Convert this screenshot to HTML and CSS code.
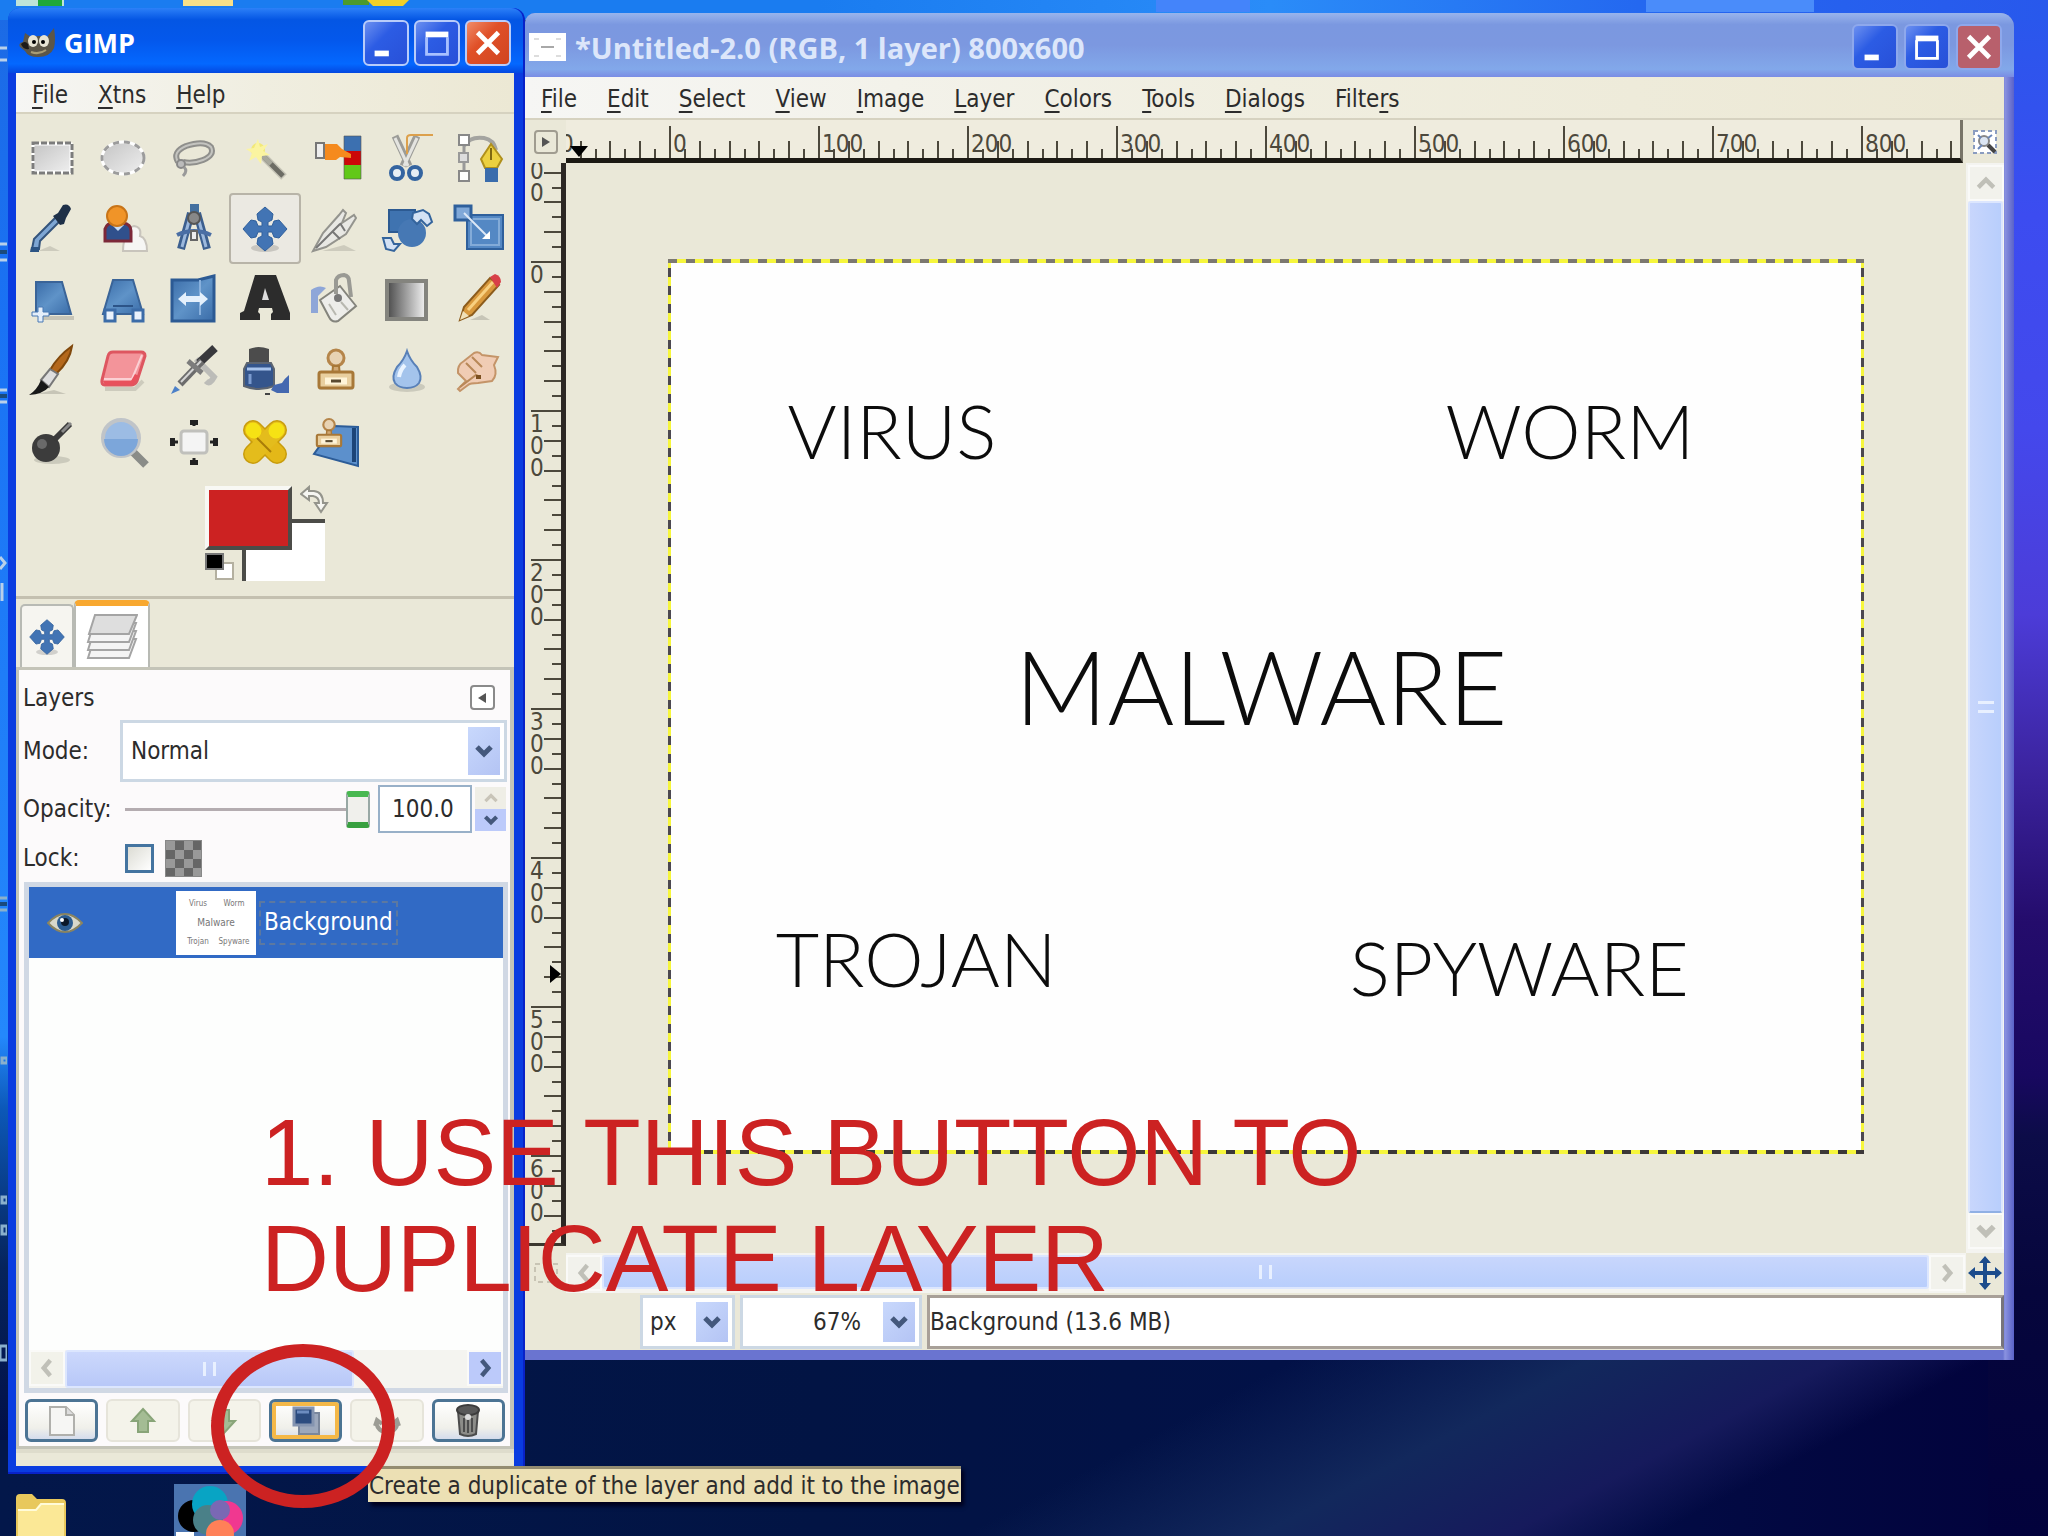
FILE: index.html
```
<!DOCTYPE html>
<html lang="en">
	<head>
		<meta charset="utf-8" />
		<meta name="viewport" content="width=device-width, initial-scale=1" />
		<title>GIMP</title>
		<link rel="stylesheet" href="styles.css">
	</head>
	<body>
		<!-- shared icon shapes -->
		<svg class="defs" width="0" height="0">
			<defs>
				<linearGradient id="gBlue" x1="0" y1="0" x2="1" y2="1">
					<stop offset="0" stop-color="#3a6ca8" />
					<stop offset="0.5" stop-color="#5f93c8" />
					<stop offset="1" stop-color="#3a6ca8" />
				</linearGradient>
				<linearGradient id="gGray" x1="0" y1="0" x2="1" y2="1">
					<stop offset="0" stop-color="#c4c4c4" />
					<stop offset="1" stop-color="#efefef" />
				</linearGradient>
				<linearGradient id="gFade" x1="0" y1="0" x2="1" y2="0">
					<stop offset="0" stop-color="#4a4a4a" />
					<stop offset="1" stop-color="#f4f4f4" />
				</linearGradient>
				<symbol id="chevDown" viewBox="0 0 20 20">
					<path d="M3 6l7 7 7-7" fill="none" stroke="currentColor" stroke-width="5" />
				</symbol>
				<symbol id="chevUp" viewBox="0 0 20 20">
					<path d="M3 14l7-7 7 7" fill="none" stroke="currentColor" stroke-width="4" />
				</symbol>
				<symbol id="chevLeft" viewBox="0 0 20 20">
					<path d="M13 3l-6 7 6 7" fill="none" stroke="currentColor" stroke-width="4" />
				</symbol>
				<symbol id="chevRight" viewBox="0 0 20 20">
					<path d="M7 3l6 7-6 7" fill="none" stroke="currentColor" stroke-width="4" />
				</symbol>
				<symbol id="move" viewBox="0 0 56 56">
					<ellipse cx="28" cy="47" rx="14" ry="4" fill="#000" opacity="0.15" />
					<path d="M28 6l8 7-1 6-4 2v4h4l2-5 5-1 8 9-8 9-5-1-2-5h-4v4l4 2 1 6-8 7-8-7 1-6 4-2v-4h-4l-2 5-5 1-8-9 8-9 5 1 2 5h4v-4l-4-2-1-6z" fill="#4274b4" stroke="#30609c" stroke-width="1" />
				</symbol>
				<symbol id="stamp" viewBox="0 0 56 56">
					<path d="M11 44h34" stroke="#000" opacity="0.2" stroke-width="5" />
					<circle cx="28" cy="15" r="8" fill="#e8d3b4" stroke="#b5854a" stroke-width="3" />
					<path d="M25 23h6l1 10h-8z" fill="#d0a874" stroke="#a87838" stroke-width="2" />
					<rect x="11" y="29" width="34" height="16" rx="2" fill="#e9cf9f" stroke="#a87838" stroke-width="3" />
					<path d="M17 38h22" stroke="#fff4d8" stroke-width="7" />
					<path d="M23 38h10" stroke="#5a4a30" stroke-width="3" />
				</symbol>
			</defs>
		</svg>

		<main class="desktop">
			<!-- desktop bits that show around the windows -->
			<div class="strip stripA"></div>
			<div class="strip stripB"></div>
			<svg class="topIcons" width="420" height="8" viewBox="0 0 420 8">
				<path d="M16 0h48v6H16z" fill="#bfe4d8" /><path d="M38 0h24v6H38z" fill="#1fa83a" />
				<path d="M183 0h50v6h-50z" fill="#f8e088" />
				<path d="M343 0h26v5h-26z" fill="#4c9a2c" /><path d="M367 0h42l-6 6h-30z" fill="#f2d028" />
			</svg>
			<svg class="edgeIcons" width="7" height="1536" viewBox="0 0 7 1536">
				<path d="M0 48h7M0 60h7M0 244h7M0 260h7M0 390h7M0 402h7M2 583v18M0 557l5 6-5 6" stroke="#b8d0ea" stroke-width="3" fill="none" />
				<path d="M0 898h7M0 910h7M2 1058h5v5H2zM2 1197h5v6H2zM2 1226h5v8H2zM0 1346h7v14H0z" stroke="#8ab0cc" stroke-width="3" fill="none" />
				<path d="M0 252h7M0 396h7M0 904h7" stroke="#1a4a7c" stroke-width="4" />
			</svg>
			<svg class="folder" width="56" height="42" viewBox="0 0 56 42">
				<path d="M2 4q0-4 4-4h12l5 5h25q4 0 4 4v33H2z" fill="#e8c85c" />
				<path d="M4 16h18l5-6h23v32H4z" fill="#fbe896" />
				<path d="M4 16h18l5-6h23" stroke="#fffbd8" stroke-width="2" fill="none" />
			</svg>
			<svg class="swatchIcon" width="72" height="52" viewBox="0 0 72 52">
				<rect width="72" height="52" fill="#4a74b0" />
				<circle cx="20" cy="32" r="16" fill="#000" />
				<circle cx="36" cy="20" r="18" fill="#08a4c4" />
				<circle cx="52" cy="34" r="17" fill="#f03890" />
				<circle cx="34" cy="36" r="15" fill="#4a8088" />
				<circle cx="46" cy="50" r="14" fill="#ff8058" />
				<circle cx="46" cy="26" r="10" fill="#7a68b4" />
				<rect x="2" y="48" width="18" height="4" fill="#fff" />
			</svg>

			<!-- image window -->
			<section class="window imageWindow">
				<header class="titleBar">
					<svg class="docIcon" width="37" height="28" viewBox="0 0 37 28">
						<rect width="37" height="28" fill="#fff" />
						<path d="M12 14h13" stroke="#a8a8a8" stroke-width="2" />
						<path d="M5 6h5M27 6h5M5 23h5M27 23h5" stroke="#ddd" stroke-width="2" />
					</svg>
					<h1>*Untitled-2.0 (RGB, 1 layer) 800x600</h1>
					<div class="winButtons">
						<button class="winBtn" aria-label="Minimize"><svg viewBox="0 0 40 40"><path d="M9 31h15" stroke="#fff" stroke-width="6" /></svg></button>
						<button class="winBtn" aria-label="Maximize"><svg viewBox="0 0 40 40"><path d="M9 13v19h22V13" fill="none" stroke="#fff" stroke-width="3" /><path d="M8 11h24" stroke="#fff" stroke-width="6" /></svg></button>
						<button class="winBtn closeBtn" aria-label="Close"><svg viewBox="0 0 40 40"><path d="M9 9l22 22M31 9L9 31" stroke="#fff" stroke-width="5" /></svg></button>
					</div>
				</header>
				<nav class="menuBar">
					<a href="#"><u>F</u>ile</a>
					<a href="#"><u>E</u>dit</a>
					<a href="#"><u>S</u>elect</a>
					<a href="#"><u>V</u>iew</a>
					<a href="#"><u>I</u>mage</a>
					<a href="#"><u>L</u>ayer</a>
					<a href="#"><u>C</u>olors</a>
					<a href="#"><u>T</u>ools</a>
					<a href="#"><u>D</u>ialogs</a>
					<a href="#">Filte<u>r</u>s</a>
				</nav>
				<div class="workArea">
					<button class="cornerBtn" aria-label="Image menu">
						<svg width="26" height="26" viewBox="0 0 26 26"><rect x="2" y="2" width="22" height="22" rx="3" fill="none" stroke="#a09c90" stroke-width="2" /><path d="M9 8l8 5-8 5z" fill="#555" /></svg>
					</button>
					<div class="hRuler"><svg id="hRuler" width="100%" height="43"></svg></div>
					<button class="cornerBtn" aria-label="Zoom image with window">
						<svg width="24" height="24" viewBox="0 0 24 24"><rect x="1" y="1" width="22" height="22" fill="#fff" stroke="#8a9cc0" stroke-width="2" stroke-dasharray="4 3" /><circle cx="11" cy="11" r="5" fill="#dce6f4" stroke="#888" stroke-width="2" /><path d="M5 5l3 3M19 5l-4 3M5 19l4-4" stroke="#6a86b8" stroke-width="2" /><path d="M15 15l7 7" stroke="#444" stroke-width="4" /></svg>
					</button>
					<div class="vRuler"><svg id="vRuler" width="41" height="100%"></svg></div>
					<div class="view">
						<div class="canvas">
							<span class="word virus">VIRUS</span>
							<span class="word worm">WORM</span>
							<span class="word malware">MALWARE</span>
							<span class="word trojan">TROJAN</span>
							<span class="word spyware">SPYWARE</span>
						</div>
					</div>
					<div class="vScroll">
						<button aria-label="Scroll up"><svg width="22" height="22"><use href="#chevUp" /></svg></button>
						<div class="thumb"><i class="grip"></i></div>
						<button aria-label="Scroll down"><svg width="22" height="22"><use href="#chevDown" /></svg></button>
					</div>
					<button class="cornerBtn" aria-label="Quick mask">
						<svg width="26" height="26" viewBox="0 0 26 26"><rect x="2" y="4" width="22" height="18" fill="none" stroke="#c8c4b4" stroke-width="2" stroke-dasharray="5 4" /></svg>
					</button>
					<div class="hScroll">
						<button aria-label="Scroll left"><svg width="22" height="22"><use href="#chevLeft" /></svg></button>
						<div class="thumb"><i class="grip"></i></div>
						<button aria-label="Scroll right"><svg width="22" height="22"><use href="#chevRight" /></svg></button>
					</div>
					<button class="cornerBtn" aria-label="Navigate">
						<svg width="34" height="34" viewBox="0 0 34 34"><path d="M17 4v26M4 17h26" stroke="#1c4c8c" stroke-width="4" /><path d="M17 0l6 7H11zM17 34l6-7H11zM0 17l7-6v12zM34 17l-7-6v12z" fill="#1c4c8c" /></svg>
					</button>
				</div>
				<footer class="statusBar">
					<span class="combo unitCombo">
						<select aria-label="Unit"><option>px</option></select>
						<span class="drop"><svg width="20" height="20"><use href="#chevDown" /></svg></span>
					</span>
					<span class="combo zoomCombo">
						<select aria-label="Zoom"><option>67%</option></select>
						<span class="drop"><svg width="20" height="20"><use href="#chevDown" /></svg></span>
					</span>
					<output class="status">Background (13.6 MB)</output>
				</footer>
			</section>

			<!-- toolbox -->
			<section class="window toolbox">
				<header class="titleBar">
					<svg class="wilber" width="38" height="32" viewBox="0 0 38 32">
						<path d="M6 6l6 4q8-2 16 0l7-9q2 12 0 20-4 9-16 9-10 0-13-6l-5-4q-2-4 3-5z" fill="#5c5648" />
						<path d="M2 17q4-4 7 0l1 5q-6 1-8-5z" fill="#1c1a18" />
						<ellipse cx="14" cy="14" rx="5" ry="6" fill="#e8e4d4" /><ellipse cx="25" cy="14" rx="5" ry="6" fill="#e8e4d4" />
						<circle cx="15" cy="15" r="2" /><circle cx="24" cy="15" r="2" />
						<path d="M12 25q8 3 15-2" stroke="#a89c74" stroke-width="2" fill="none" />
					</svg>
					<h1>GIMP</h1>
					<div class="winButtons">
						<button class="winBtn" aria-label="Minimize"><svg viewBox="0 0 40 40"><path d="M8 31h15" stroke="#fff" stroke-width="6" /></svg></button>
						<button class="winBtn" aria-label="Maximize"><svg viewBox="0 0 40 40"><path d="M9 14v18h22V14" fill="none" stroke="#a8c0ff" stroke-width="3" /><path d="M8 11h24" stroke="#fff" stroke-width="6" /></svg></button>
						<button class="winBtn closeBtn" aria-label="Close"><svg viewBox="0 0 40 40"><path d="M9 9l22 22M31 9L9 31" stroke="#fff" stroke-width="5" /></svg></button>
					</div>
				</header>
				<nav class="menuBar">
					<a href="#"><u>F</u>ile</a>
					<a href="#"><u>X</u>tns</a>
					<a href="#"><u>H</u>elp</a>
				</nav>

				<div class="tools">
					<button aria-label="Rectangle select"><svg viewBox="0 0 56 56"><rect x="9" y="14" width="38" height="28" fill="url(#gGray)" stroke="#fff" stroke-width="3" /><rect x="9" y="13" width="39" height="30" fill="none" stroke="#7c7c7c" stroke-width="3" stroke-dasharray="6 2" /></svg></button>
					<button aria-label="Ellipse select"><svg viewBox="0 0 56 56"><ellipse cx="28" cy="28" rx="21" ry="16" fill="url(#gGray)" stroke="#fff" stroke-width="3" /><ellipse cx="28" cy="28" rx="21" ry="16" fill="none" stroke="#9c9c9c" stroke-width="3" stroke-dasharray="6 5" /></svg></button>
					<button aria-label="Free select"><svg viewBox="0 0 56 56"><path d="M12 32q-6-10 8-16 18-6 25 1 4 8-8 13-10 4-20 2" fill="none" stroke="#8f8f8c" stroke-width="6" /><path d="M12 32q-6-10 8-16 18-6 25 1 4 8-8 13-10 4-20 2" fill="none" stroke="#c4c4c0" stroke-width="2" /><circle cx="15" cy="34" r="4" fill="#bbb" stroke="#888" stroke-width="2" /><path d="M18 37q4 4-1 9" fill="none" stroke="#999" stroke-width="3" /></svg></button>
					<button aria-label="Fuzzy select"><svg viewBox="0 0 56 56"><path d="M27 27l20 20" stroke="#000" opacity="0.15" stroke-width="8" /><path d="M24 24l22 22" stroke="#6c6c64" stroke-width="5" /><path d="M24 24l10 10" stroke="#a8a89c" stroke-width="5" /><circle cx="21" cy="20" r="7" fill="#f4e860" opacity="0.8" /><path d="M21 9l2 8 8-3-5 7 7 4-8 1-1 8-5-7-7 4 3-8-6-4 8-1z" fill="#fbf4a0" /></svg></button>
					<button aria-label="Select by color"><svg viewBox="0 0 56 56"><rect x="36" y="6" width="17" height="15" fill="#3c70b0" /><rect x="36" y="21" width="17" height="14" fill="#cc0808" /><rect x="36" y="35" width="17" height="14" fill="#62c818" /><path d="M36 6h17v43H36z" fill="none" stroke="#555" stroke-width="1" opacity="0.6" /><rect x="8" y="13" width="8" height="15" fill="#eee" stroke="#777" stroke-width="2" /><path d="M17 14h12l5 5 9 5v4l-11-1-4 3H17z" fill="#f58a1e" /></svg></button>
					<button aria-label="Scissors select"><svg viewBox="0 0 56 56"><path d="M16 6l14 30M38 6L24 36" stroke="#9c9c98" stroke-width="7" /><path d="M16 8l13 28M38 8L25 36" stroke="#e4e4e0" stroke-width="3" /><path d="M28 24V8q0-3 4-3h22" fill="none" stroke="#dca04c" stroke-width="2" /><circle cx="18" cy="43" r="6" fill="#e8eef4" stroke="#3464a0" stroke-width="4" /><circle cx="36" cy="43" r="6" fill="#e8eef4" stroke="#3464a0" stroke-width="4" /></svg></button>
					<button aria-label="Paths"><svg viewBox="0 0 56 56"><path d="M14 10v38" stroke="#999" stroke-width="3" /><path d="M14 16q6-10 20-8 10 2 12 12" fill="none" stroke="#a4a4a0" stroke-width="4" /><rect x="9" y="5" width="10" height="10" fill="#fff" stroke="#888" stroke-width="2" /><rect x="9" y="23" width="9" height="9" fill="#ddd" stroke="#999" stroke-width="2" /><rect x="9" y="41" width="10" height="10" fill="#fff" stroke="#888" stroke-width="2" /><path d="M41 14l11 15-5 9H35l-4-9z" fill="#ecd040" stroke="#b0901c" stroke-width="2" /><path d="M41 18v12" stroke="#806810" stroke-width="2" /><rect x="35" y="38" width="13" height="14" fill="#3a6cac" /></svg></button>

					<button aria-label="Color picker"><svg viewBox="0 0 56 56"><path d="M14 50h22l-10-5z" opacity="0.12" /><path d="M8 48l2-10 22-22 4 4-20 20-1 8z" fill="#7ea6d4" stroke="#34547c" stroke-width="2" /><path d="M7 46h8v5H6z" fill="#2c5484" /><path d="M29 15l5-3 5-8q6-2 8 4l-5 9-2 6-4 1z" fill="#1e3048" /></svg></button>
					<button aria-label="Foreground select"><svg viewBox="0 0 56 56"><path d="M28 50q0-14 6-15-2-9 5-10 8 1 6 10 7 2 7 15z" fill="#f6f6f4" stroke="#c8c4bc" stroke-width="2" /><path d="M10 40V28q2-6 8-6h10q8 1 8 8v10z" fill="#30508c" stroke="#7c2838" stroke-width="3" /><path d="M17 24l6 6 6-6z" fill="#c8dcf4" /><circle cx="22" cy="15" r="10" fill="#f09428" stroke="#c87418" stroke-width="2" /></svg></button>
					<button aria-label="Measure"><svg viewBox="0 0 56 56"><path d="M25 12L15 48M31 12l10 36" stroke="#3c5f8f" stroke-width="8" /><path d="M24 16l-8 30M32 16l8 30" stroke="#9cb8dc" stroke-width="3" /><path d="M11 34q17-8 34 0" fill="none" stroke="#4a6ea4" stroke-width="4" /><rect x="24" y="3" width="9" height="9" fill="#44709f" /><circle cx="28" cy="17" r="6" fill="#888" stroke="#555" stroke-width="2" /><rect x="25" y="30" width="6" height="9" fill="#eee" stroke="#666" stroke-width="2" /></svg></button>
					<button class="active" aria-label="Move"><svg><use href="#move" /></svg></button>
					<button aria-label="Crop"><svg viewBox="0 0 56 56"><path d="M14 50h34l-12-6z" opacity="0.12" /><path d="M5 50l10-18 16-18 4-5 3 3-4 10 12-8 2 3-10 16-20 13z" fill="#e8e8e4" stroke="#94948e" stroke-width="2" /><path d="M8 47l24-24M24 30l8 8M32 22l5 8" stroke="#777" stroke-width="2" /></svg></button>
					<button aria-label="Rotate"><svg viewBox="0 0 56 56"><path d="M10 9h26v22H10z" fill="#3f73b0" stroke="#2c5a92" stroke-width="2" /><circle cx="33" cy="32" r="14" fill="#4678b4" /><path d="M34 12l10-3 6 4 3 8-5 4-6-6-4 4-5-5z" fill="#d4e2f4" stroke="#34649c" stroke-width="2" /><path d="M4 37h8l3 6h6l-6 7-8-2z" fill="#d4e2f4" stroke="#34649c" stroke-width="2" /></svg></button>
					<button aria-label="Scale"><svg viewBox="0 0 56 56"><rect x="17" y="14" width="36" height="34" fill="#5488c4" stroke="#2f609c" stroke-width="2" /><rect x="21" y="18" width="28" height="26" fill="none" stroke="#83abd8" stroke-width="2" /><rect x="5" y="5" width="16" height="14" fill="#80a8d8" stroke="#2f609c" stroke-width="3" /><path d="M14 12l24 24" stroke="#dce8f6" stroke-width="2" /><path d="M32 38h8v-8z" fill="#fff" /></svg></button>

					<button aria-label="Shear"><svg viewBox="0 0 56 56"><path d="M16 46h34" stroke="#000" opacity="0.15" stroke-width="4" /><path d="M12 10h26l9 32H12z" fill="url(#gBlue)" stroke="#3a6498" stroke-width="2" /><path d="M8 40h6v-5h5v5h6v4h-6v6h-5v-6H8z" fill="#e4eefa" stroke="#4878b4" stroke-width="1" /></svg></button>
					<button aria-label="Perspective"><svg viewBox="0 0 56 56"><path d="M18 8h20l10 34H8z" fill="url(#gBlue)" stroke="#3a6498" stroke-width="2" /><path d="M18 34h20" stroke="#2c5488" stroke-width="2" /><rect x="10" y="38" width="10" height="11" fill="#eaf2fc" stroke="#3c6ca8" stroke-width="3" /><rect x="38" y="38" width="10" height="11" fill="#eaf2fc" stroke="#3c6ca8" stroke-width="3" /></svg></button>
					<button aria-label="Flip"><svg viewBox="0 0 56 56"><path d="M6 8h26l16-4v45H6z" fill="url(#gBlue)" stroke="#2c5a94" stroke-width="3" /><path d="M34 8v35" stroke="#88b0dc" stroke-width="2" /><path d="M12 27l8-7v4h14v-4l8 7-8 7v-4H20v4z" fill="#e4f0fc" /></svg></button>
					<button aria-label="Text"><svg viewBox="0 0 56 56"><path d="M18 3h21l14 38v7H34v-6l2-2-1-4H22l-1 4 2 2v6H3v-7l4-2z" fill="#2c2c2c" /><path d="M25 28l3-12 4 12z" fill="#ddd" /></svg></button>
					<button aria-label="Bucket fill"><svg viewBox="0 0 56 56"><path d="M3 18q8-6 15-2l-8 8v17H3z" fill="#8ea6d8" /><path d="M12 28l20-14 16 20-18 15q-6 2-9-4z" fill="#ededea" stroke="#84847c" stroke-width="2" /><path d="M28 22V8q2-5 8-5 5 1 5 6l2 16" fill="none" stroke="#9a9a94" stroke-width="4" /><circle cx="30" cy="26" r="4" fill="#777" /><path d="M21 32l7 11M33 30l7 8" stroke="#b8b8b0" stroke-width="2" /></svg></button>
					<button aria-label="Blend"><svg viewBox="0 0 56 56"><rect x="8" y="9" width="39" height="38" fill="url(#gFade)" stroke="#84847e" stroke-width="4" /></svg></button>
					<button aria-label="Pencil"><svg viewBox="0 0 56 56"><path d="M20 48h20l-8-5z" opacity="0.15" /><path d="M10 48l4-13 26-29 9 7-27 30z" fill="#d8983c" stroke="#8c5c1c" stroke-width="2" /><path d="M18 38l25-28" stroke="#f8d080" stroke-width="3" /><path d="M40 5l5-3q6 2 6 8l-4 6z" fill="#d84048" /><path d="M10 48l3-9 6 5z" fill="#f0e0b8" /></svg></button>

					<button aria-label="Paintbrush"><svg viewBox="0 0 56 56"><path d="M12 51h30l-12-4z" opacity="0.15" /><path d="M48 3q-14 10-22 24l6 4Q46 18 48 3z" fill="#b4681c" stroke="#80480c" stroke-width="2" /><path d="M26 26l8 5-9 13-8-7z" fill="#dedede" stroke="#777" stroke-width="2" /><path d="M17 37l8 7q-6 7-20 8 8-5 12-15z" fill="#181818" /></svg></button>
					<button aria-label="Eraser"><svg viewBox="0 0 56 56"><path d="M10 46h30l8-8" fill="none" stroke="#000" opacity="0.12" stroke-width="4" /><path d="M18 9h28q4 0 4 4l-8 25q-2 4-6 4H10q-4 0-3-5l6-24q1-4 5-4z" fill="#f3949a" stroke="#de5660" stroke-width="3" /><path d="M9 36h28l10-24" fill="none" stroke="#fbd0d4" stroke-width="2" /><path d="M8 38h28l4-7 4 2-6 9H10z" fill="#e8505c" /></svg></button>
					<button aria-label="Airbrush"><svg viewBox="0 0 56 56"><path d="M30 16l18 18q-4 8-8 4" fill="none" stroke="#bcbcb8" stroke-width="6" /><path d="M49 5L33 20" stroke="#38383c" stroke-width="8" /><path d="M36 18L14 41" stroke="#6c6c6c" stroke-width="7" /><path d="M35 18L15 39" stroke="#d4d4d4" stroke-width="2" /><path d="M22 18l14 12" stroke="#7c7c7c" stroke-width="5" /><path d="M5 51l4-8 5 4z" fill="#4c80c8" /></svg></button>
					<button aria-label="Ink"><svg viewBox="0 0 56 56"><path d="M12 6q9-4 20 0v14H12z" fill="#4c4c4c" /><path d="M10 20h24l3 6v17q-15 6-30 0V26z" fill="#34558c" stroke="#5c6470" stroke-width="2" /><path d="M10 26h24" stroke="#a8c4ec" stroke-width="3" /><path d="M13 31v10" stroke="#7c9cd0" stroke-width="3" /><path d="M52 32q-5 4-7 8l-8 2-3 5 6 3 12 0z" fill="#4468b0" /><path d="M28 51h5" stroke="#444" stroke-width="2" /></svg></button>
					<button aria-label="Clone"><svg><use href="#stamp" /></svg></button>
					<button aria-label="Blur"><svg viewBox="0 0 56 56"><ellipse cx="28" cy="44" rx="18" ry="5" opacity="0.13" /><path d="M28 8q3 9 10 16 6 10 2 16-4 5-12 5t-12-5q-4-6 2-16 7-7 10-16z" fill="#a4c4ec" stroke="#5880b8" stroke-width="2" /><path d="M20 34q1-7 6-12" fill="none" stroke="#eaf4ff" stroke-width="4" /></svg></button>
					<button aria-label="Smudge"><svg viewBox="0 0 56 56"><path d="M8 46l8-8-8-8q-1-8 6-12l10-8q5-2 8 2l16 2-4 8q4 10-2 16l-14 2q-8 0-10 2l-8 6z" fill="#f0ccb4" stroke="#c49468" stroke-width="2" /><path d="M16 20l10 10M22 14l10 10M10 44l16-12 4 2" stroke="#b88858" stroke-width="2" fill="none" /><path d="M26 32h5v4h-5z" fill="#7c5020" /></svg></button>

					<button aria-label="Dodge and burn"><svg viewBox="0 0 56 56"><ellipse cx="28" cy="46" rx="18" ry="4" opacity="0.13" /><circle cx="22" cy="34" r="14" fill="#3c3c3c" /><circle cx="18" cy="30" r="5" fill="#6a6a6a" /><path d="M30 26L46 10" stroke="#3a3a3a" stroke-width="6" /><path d="M38 18l9-9" stroke="#888" stroke-width="3" /></svg></button>
					<button aria-label="Zoom"><svg viewBox="0 0 56 56"><path d="M38 38l13 13" stroke="#8a8c88" stroke-width="8" /><circle cx="26" cy="24" r="18" fill="#9cbce4" stroke="#c0c4c8" stroke-width="4" /><path d="M9 25h34a17 17 0 0 1-34 0z" fill="#7ca6da" /></svg></button>
					<button aria-label="Align"><svg viewBox="0 0 56 56"><rect x="15" y="17" width="26" height="22" rx="3" fill="#f4f4f4" stroke="#c0c0bc" stroke-width="3" /><path d="M28 12V7M28 44v7M12 28H5M44 28h7" stroke="#222" stroke-width="3" /><path d="M24 6h8v5h-8zM24 46h8v5h-8zM4 24h5v8H4zM47 24h5v8h-5z" fill="#222" /></svg></button>
					<button aria-label="Heal"><svg viewBox="0 0 56 56"><path d="M16 16l24 24" stroke="#c89c0c" stroke-width="20" stroke-linecap="round" /><path d="M40 16L16 40" stroke="#c89c0c" stroke-width="20" stroke-linecap="round" /><path d="M16 16l24 24" stroke="#e4b818" stroke-width="17" stroke-linecap="round" /><path d="M40 16L16 40" stroke="#e4bc1c" stroke-width="17" stroke-linecap="round" /><path d="M16 16l1 1M40 16l-1 1" stroke="#f6e214" stroke-width="15" stroke-linecap="round" /><path d="M20 24l14 14" stroke="#a87c08" stroke-width="2" /></svg></button>
					<button aria-label="Perspective clone"><svg viewBox="0 0 56 56"><path d="M26 12l24 1v39L6 40z" fill="#5c90cc" stroke="#2c5c98" stroke-width="2" /><path d="M46 14v34" stroke="#1c4478" stroke-width="4" /><svg x="0" y="0" width="42" height="40"><use href="#stamp" /></svg></svg></button>
				</div>

				<div class="colors">
					<div class="bgColor"></div>
					<div class="fgColor"></div>
					<svg class="swap" width="30" height="30" viewBox="0 0 30 30"><path d="M1 9l8-7v4h5q9 1 9 12h4l-6 9-6-9h4q0-6-6-7H9v4z" fill="#f6f6f2" stroke="#94948c" stroke-width="2" /></svg>
					<svg class="resetColors" width="30" height="28" viewBox="0 0 30 28"><rect x="11" y="10" width="17" height="16" fill="#fff" stroke="#b4b0a0" stroke-width="2" /><rect x="1" y="1" width="17" height="15" stroke="#777" stroke-width="2" /></svg>
				</div>

				<div class="tabs">
					<button class="tab" aria-label="Tool options"><svg width="44" height="48"><use href="#move" /></svg></button>
					<button class="tab tabActive" aria-label="Layers">
						<svg width="52" height="48" viewBox="0 0 52 48"><g fill="#f4f4f4" stroke="#a4a4a4" stroke-width="2"><path d="M8 26h42l-7 19H2z" /><path d="M8 18h42l-7 19H2z" /><path d="M8 10h42l-7 19H2z" /><path d="M9 2h42l-8 19H3z" fill="#dedede" /></g></svg>
					</button>
				</div>

				<div class="dock">
					<div class="dockHead">
						<h2>Layers</h2>
						<button aria-label="Tab menu"><svg width="26" height="26" viewBox="0 0 26 26"><rect x="1" y="1" width="23" height="23" rx="3" fill="#fff" stroke="#8a8a8a" stroke-width="2" /><path d="M8 13l8-5v10z" fill="#555" /></svg></button>
					</div>
					<div class="row modeRow">
						<label for="mode">Mode:</label>
						<span class="combo">
							<select id="mode"><option>Normal</option></select>
							<span class="drop"><svg width="20" height="20"><use href="#chevDown" /></svg></span>
						</span>
					</div>
					<div class="row opacityRow">
						<label for="opacity">Opacity:</label>
						<input type="range" id="opacity" min="0" max="100" value="100" class="slider" />
						<input type="text" class="amount" value="100.0" aria-label="Opacity value" />
						<span class="spin">
							<button aria-label="Increase" disabled><svg width="16" height="16"><use href="#chevUp" /></svg></button>
							<button aria-label="Decrease"><svg width="16" height="16"><use href="#chevDown" /></svg></button>
						</span>
					</div>
					<div class="row lockRow">
						<label for="lock">Lock:</label>
						<input type="checkbox" id="lock" />
						<i class="checker"></i>
					</div>
					<div class="layerList">
						<div class="layer">
							<svg class="eye" width="36" height="24" viewBox="0 0 36 24"><path d="M1 12Q18-6 35 12 18 30 1 12z" fill="#d8d8cc" stroke="#8a8460" stroke-width="2" /><circle cx="18" cy="12" r="8" fill="#2c5c90" /><circle cx="18" cy="11" r="4" fill="#0c1828" /><circle cx="15" cy="9" r="2" fill="#fff" /></svg>
							<div class="thumbnail">
								<span>Virus</span><span>Worm</span>
								<span class="mid">Malware</span>
								<span>Trojan</span><span>Spyware</span>
							</div>
							<span class="layerName">Background</span>
						</div>
						<div class="listScroll">
							<button class="off" aria-label="Scroll left"><svg width="22" height="22"><use href="#chevLeft" /></svg></button>
							<div class="thumb"><i class="grip"></i></div>
							<span class="track"></span>
							<button aria-label="Scroll right"><svg width="22" height="22"><use href="#chevRight" /></svg></button>
						</div>
					</div>
					<div class="layerButtons">
						<button aria-label="New layer"><svg width="30" height="32" viewBox="0 0 30 32"><path d="M3 2h16l8 8v20H3z" fill="#f6f6f4" stroke="#b0b0ac" stroke-width="2" /><path d="M19 2v8h8" fill="#ddd" stroke="#b0b0ac" stroke-width="2" /></svg></button>
						<button class="off" aria-label="Raise layer"><svg width="30" height="32" viewBox="0 0 30 32"><path d="M15 4l11 12h-6v11H10V16H4z" fill="#a4bc94" stroke="#88a478" stroke-width="2" /></svg></button>
						<button class="off" aria-label="Lower layer"><svg width="30" height="32" viewBox="0 0 30 32"><path d="M15 28L4 16h6V5h10v11h6z" fill="#a4bc94" stroke="#88a478" stroke-width="2" /></svg></button>
						<button class="hover" aria-label="Duplicate layer"><svg width="30" height="32" viewBox="0 0 30 32"><path d="M8 8h20v21H8z" fill="#9ca8bc" stroke="#7a879c" stroke-width="2" /><path d="M3 3h19v17H3z" fill="#2c4c80" stroke="#8494b0" stroke-width="3" /><path d="M6 7h12" stroke="#6c8cc0" stroke-width="3" /></svg></button>
						<button class="off" aria-label="Anchor layer"><svg width="30" height="32" viewBox="0 0 30 32"><path d="M15 4v23M4 17q2 10 11 10t11-10M3 21l2-6 5 4M27 21l-2-6-5 4" fill="none" stroke="#9c9c94" stroke-width="4" /></svg></button>
						<button aria-label="Delete layer"><svg width="30" height="36" viewBox="0 0 30 36"><path d="M5 8h20l-2 23q-8 4-16 0z" fill="#8c8c88" stroke="#4c4c4c" stroke-width="2" /><ellipse cx="15" cy="7" rx="11" ry="5" fill="#585858" stroke="#3c3c3c" stroke-width="2" /><path d="M11 15v14M15 15v15M19 15v14" stroke="#4c4c4c" stroke-width="2" /><circle cx="15" cy="14" r="3" fill="#ddd" /></svg></button>
					</div>
				</div>
				<div class="dockFoot"></div>
			</section>

			<div class="tooltip" role="tooltip">Create a duplicate of the layer and add it to the image</div>

			<!-- tutorial notes drawn over the windows -->
			<p class="note">1. USE THIS BUTTON TO<br>DUPLICATE LAYER</p>
			<div class="ring"></div>
		</main>
		<script src="script.js"></script>
	</body>
</html>
```
FILE: styles.css
```
* {
	box-sizing: border-box;
}
body {
	margin: 0;
	font-family: "DejaVu Sans Condensed", "DejaVu Sans", sans-serif;
	font-size: 24px;
	color: #2c2c2c;
}
button,
input,
select {
	font: inherit;
	color: inherit;
	margin: 0;
	padding: 0;
	border: none;
	background: none;
}
svg {
	display: block;
}
a {
	color: inherit;
	text-decoration: none;
}
u {
	text-underline-offset: 4px;
	text-decoration-thickness: 2px;
}
.defs {
	position: absolute;
}

/* desktop */
.desktop {
	position: relative;
	height: 100vh;
	overflow: hidden;
	background:
		linear-gradient(to right, #1a7cf0, #1a7cf0 40%, #2a8cf8 62%, #2468f0 80%, #2858ec) 0 0 / 100% 20px no-repeat,
		linear-gradient(#1c6ae4 0, #1a72f4 22%, #2488fc 72%, #0c58b8 77%, #06245c 88%, #021048 100%) 0 0 / 12px 1440px no-repeat,
		linear-gradient(#2858ec 0, #3c4cf0 14%, #4448ec 28%, #4c3cd8 40%, #3c24a0 50%, #240c6c 60%, #180860 70%, #0c0c48 74%, #06063c 84%, #02023c 100%) 100% 0 / 60px 100% no-repeat,
		linear-gradient(152deg, transparent 78%, #12285c 84%, #161a5c 89%, transparent 92%),
		linear-gradient(to right, #03174a, #021444 40%, #021048 70%, #02023c);
}
.strip {
	position: absolute;
	top: 0;
	height: 12px;
}
.stripA {
	left: 1156px;
	width: 94px;
	background: #4484fa;
}
.stripB {
	left: 1646px;
	width: 168px;
	background: #4a8cfa;
}
.topIcons {
	position: absolute;
	left: 0;
	top: 0;
}
.edgeIcons {
	position: absolute;
	left: 0;
	top: 0;
}
.folder {
	position: absolute;
	left: 14px;
	bottom: 0;
}
.swatchIcon {
	position: absolute;
	left: 174px;
	bottom: 0;
}

/* windows */
.window {
	position: absolute;
	display: flex;
	flex-direction: column;
}
.imageWindow {
	left: 525px;
	right: 34px;
	top: 13px;
	bottom: 176px;
	padding: 0 10px 10px 0;
	background: linear-gradient(to right, transparent 1478px, #8a92e0 1480px, #5a62c8), #6a74d0;
	border-radius: 10px 14px 0 0;
}
.toolbox {
	left: 8px;
	top: 8px;
	bottom: 62px;
	width: 517px;
	padding: 0 9px 6px 8px;
	background: #0a3ce0;
	border: solid #0822c8;
	border-width: 0 2px 2px 0;
	border-radius: 12px 12px 0 0;
}
.titleBar {
	display: flex;
	align-items: center;
	flex: none;
	color: #fff;
}
.titleBar h1 {
	flex: 1;
	margin: 0;
	font: bold 27px "Open Sans", sans-serif;
}
.imageWindow .titleBar {
	height: 64px;
	margin-right: -10px;
	padding: 4px 12px 0 4px;
	background: linear-gradient(#98b4ec, #7b98e0 18%, #7c98e0 50%, #82a8ea 88%, #7a8ce4);
	border-radius: 10px 14px 0 0;
}
.imageWindow h1 {
	padding-left: 9px;
	font-size: 29px;
	color: #dce6fa;
}
.toolbox .titleBar {
	height: 65px;
	margin: 0 -9px 0 -8px;
	padding: 4px 12px 0 11px;
	background: linear-gradient(#2c80f8, #0456e4 18%, #0458ec 50%, #0468ff 86%, #0448e0);
	border-radius: 12px 12px 0 0;
}
.toolbox h1 {
	padding-left: 7px;
}
.winButtons {
	display: flex;
	gap: 5px;
}
.imageWindow .winButtons {
	gap: 6px;
}
.winBtn {
	width: 46px;
	height: 46px;
	padding: 2px;
	background: linear-gradient(135deg, #6c90f0, #2c5ce4 40%, #2850d8);
	border: 2px solid #b8ccfa;
	border-radius: 6px;
}
.closeBtn {
	background: linear-gradient(135deg, #f08c68, #e05028 40%, #d04420);
}
.imageWindow .winBtn {
	border-color: #8ea8ec;
}
.imageWindow .closeBtn {
	background: #b8606c;
}
.menuBar {
	display: flex;
	align-items: center;
	flex: none;
	gap: 30px;
	height: 43px;
	padding: 3px 16px 0;
	background: linear-gradient(to right, #f6f6f4, #f0eee0 50%, #ece8d4);
	border-bottom: 2px solid #d6d2c0;
}
.toolbox .menuBar {
	height: 41px;
	padding: 5px 16px 0;
}

/* image window */
.workArea {
	flex: 1;
	display: grid;
	grid-template-columns: 41px 1fr 38px;
	grid-template-rows: 43px 1fr 40px;
	min-height: 0;
	background: #eae8d8;
}
.cornerBtn {
	display: flex;
	align-items: center;
	justify-content: center;
}
.hRuler,
.vRuler {
	min-width: 0;
	min-height: 0;
	overflow: hidden;
}
.hRuler {
	margin-right: 3px;
	background: #efecde;
	border-right: 3px solid #777468;
	border-bottom: 5px solid #1c1a14;
}
.vRuler {
	margin-bottom: 7px;
	border-right: 5px solid #2c2824;
	border-bottom: 3px solid #3c3830;
}
.tick {
	stroke: #4c483c;
	stroke-width: 2px;
}
.rulerText {
	font-size: 24px;
	fill: #4c483c;
}
.view {
	display: flex;
	padding: 96px 102px 99px 102px;
}
.canvas {
	position: relative;
	flex: 1;
	background:
		repeating-linear-gradient(to right, #7c7870 0 9px, #f6f63c 9px 18px) top / 100% 4px no-repeat,
		repeating-linear-gradient(to right, #3c3838 0 9px, #f6f63c 9px 18px) bottom / 100% 4px no-repeat,
		repeating-linear-gradient(#f6f63c 0 9px, #4c4850 9px 18px) left / 3px 100% no-repeat,
		repeating-linear-gradient(#f6f63c 0 9px, #4c4850 9px 18px) right / 3px 100% no-repeat,
		#fefefe;
}
.word {
	position: absolute;
	font-family: Lato, sans-serif;
	font-weight: 300;
	font-size: 75px;
	line-height: 1;
	color: #0c0c0c;
}
.virus {
	left: 10%;
	top: 15%;
}
.worm {
	left: 65%;
	top: 15%;
}
.malware {
	left: 29%;
	top: 42%;
	font-size: 102px;
}
.trojan {
	left: 9%;
	top: 74%;
}
.spyware {
	left: 57%;
	top: 75%;
}
.vScroll,
.hScroll,
.listScroll {
	display: flex;
	color: #c0c0b8;
}
.vScroll {
	flex-direction: column;
	padding: 2px 1px 4px 2px;
	background: #f4f4f0;
}
.hScroll {
	padding: 2px 1px 4px 0;
	background: #f4f4f0;
}
.vScroll button,
.hScroll button,
.listScroll button {
	display: flex;
	flex: none;
	align-items: center;
	justify-content: center;
	width: 36px;
	height: 36px;
	background: #f2f2ec;
	border: 2px solid #fafaf8;
}
.thumb {
	display: flex;
	flex: 1;
	align-items: center;
	justify-content: center;
	background: linear-gradient(#c8d6fc, #b8cefc);
	border: 2px solid #dce6fe;
	border-radius: 3px;
}
.vScroll .thumb {
	background: linear-gradient(to right, #c8d6fc, #b8cefc);
	border-bottom-color: #90b0e4;
}
.grip {
	width: 13px;
	height: 14px;
	border: solid #e8f0ff;
	border-width: 0 3px;
}
.vScroll .grip {
	width: 16px;
	height: 12px;
	border-width: 3px 0;
}
.statusBar {
	display: flex;
	flex: none;
	gap: 5px;
	height: 57px;
	padding: 2px 0 1px 115px;
	background: #eae8d8;
}
.combo {
	display: flex;
	background: #fff;
	border: 3px solid #ccd8e4;
}
.combo select {
	flex: 1;
	min-width: 0;
	appearance: none;
}
.drop {
	display: flex;
	align-items: center;
	justify-content: center;
	width: 32px;
	margin: 4px;
	color: #44587c;
	background: linear-gradient(135deg, #c8d8fc, #b4c4f4);
}
.unitCombo {
	width: 95px;
}
.unitCombo select {
	padding-left: 7px;
}
.zoomCombo {
	width: 182px;
}
.zoomCombo select {
	padding-left: 70px;
}
.status {
	flex: 1;
	display: flex;
	align-items: center;
	background: #fff;
	border: 3px solid #a8a098;
	border-right-color: #77747c;
}

/* toolbox */
.toolbox > .tools,
.toolbox > .colors,
.toolbox > .tabs,
.toolbox > .dock,
.toolbox > .dockFoot {
	background: #eae8d8;
}
.tools {
	display: grid;
	grid-template-columns: repeat(7, 1fr);
	grid-auto-rows: 71px;
	flex: none;
	padding: 8px 0;
}
.tools button {
	display: flex;
	align-items: center;
	justify-content: center;
	border: 2px solid transparent;
	border-radius: 4px;
}
.tools button > svg {
	width: 56px;
	height: 56px;
}
.tools .active {
	background: #ebe9e2;
	border-color: #b8b4a8;
}
.colors {
	position: relative;
	flex: none;
	height: 114px;
	border-bottom: 3px solid #c4c0b0;
}
.bgColor,
.fgColor,
.swap,
.resetColors {
	position: absolute;
}
.bgColor {
	left: 226px;
	top: 34px;
	width: 83px;
	height: 62px;
	background: #fff;
	border: solid #4c4c48;
	border-width: 4px 0 0 4px;
}
.fgColor {
	left: 189px;
	top: 1px;
	width: 87px;
	height: 64px;
	background: #cc2222;
	border: 4px solid #f8f8f4;
	border-right-color: #4c4c48;
	border-bottom-color: #4c4c48;
}
.swap {
	left: 284px;
	top: 0;
}
.resetColors {
	left: 189px;
	top: 68px;
}
.tabs {
	display: flex;
	align-items: flex-end;
	flex: none;
	height: 68px;
	padding-left: 4px;
}
.tab {
	display: flex;
	align-items: center;
	justify-content: center;
	width: 54px;
	height: 63px;
	background: #f6f5f0;
	border: 2px solid #b8bab4;
	border-bottom: none;
	border-radius: 5px 5px 0 0;
}
.tabActive {
	width: 76px;
	height: 67px;
	background: #fff;
	border-top: 6px solid #f8a830;
}
.dock {
	display: flex;
	flex: 1;
	flex-direction: column;
	min-height: 0;
	border: 3px solid #c4c4b8;
	border-right-width: 4px;
}
.toolbox > .dock {
	background: #fcfafb;
}
.dockHead {
	display: flex;
	align-items: center;
	justify-content: space-between;
	height: 50px;
	padding: 5px 14px 0 4px;
}
.dockHead h2 {
	margin: 0;
	font-size: 24px;
	font-weight: normal;
}
.row {
	display: flex;
	align-items: center;
	flex: none;
	padding: 0 4px;
}
.row label {
	width: 102px;
}
.modeRow {
	height: 62px;
	padding-right: 3px;
}
.modeRow label {
	width: 97px;
}
.modeRow .combo {
	flex: 1;
	height: 62px;
}
.modeRow select {
	padding-left: 8px;
}
.opacityRow {
	height: 54px;
}
.slider {
	-webkit-appearance: none;
	appearance: none;
	flex: 1;
	min-width: 0;
	height: 38px;
	background: linear-gradient(#b4acb0, #b4acb0) center / 100% 3px no-repeat;
}
.slider::-webkit-slider-thumb {
	-webkit-appearance: none;
	width: 24px;
	height: 37px;
	background: #f0f0ec;
	border: 2px solid #98a8a4;
	border-top: 6px solid #48b850;
	border-bottom: 6px solid #38a040;
	border-radius: 3px;
}
.amount {
	width: 94px;
	height: 48px;
	margin: 0 3px 0 8px;
	padding-left: 12px;
	background: #fff;
	border: 2px solid #98b0c8;
}
.spin {
	display: flex;
	flex-direction: column;
	width: 31px;
}
.spin button {
	display: flex;
	align-items: center;
	justify-content: center;
	height: 22px;
	color: #44587c;
	background: #bccafa;
}
.spin button:disabled {
	color: #c8c4b8;
	background: #efeee6;
}
.lockRow {
	height: 44px;
}
.lockRow input {
	appearance: none;
	width: 29px;
	height: 29px;
	background: linear-gradient(135deg, #dcdcd4, #fff);
	border: 3px solid #4474a0;
}
.checker {
	width: 37px;
	height: 37px;
	margin-left: 11px;
	background: conic-gradient(#666 25%, #999 0 50%, #666 0 75%, #999 0) 0 0 / 18px 18px;
	border: 1px solid #888;
}
.layerList {
	display: flex;
	flex: 1;
	flex-direction: column;
	justify-content: space-between;
	min-height: 0;
	margin: 2px 2px 0 5px;
	background: #fdfefd;
	border: 5px solid #d0d8e4;
}
.layer {
	display: flex;
	align-items: center;
	height: 71px;
	padding-left: 18px;
	color: #fff;
	background: #316ac5;
}
.thumbnail {
	display: grid;
	grid-template-columns: 1fr 1fr;
	align-items: center;
	justify-items: center;
	width: 80px;
	height: 64px;
	margin: 0 3px 0 93px;
	padding: 4px;
	font-size: 8px;
	color: #777;
	background: #fff;
}
.thumbnail .mid {
	grid-column: 1 / 3;
	font-size: 10px;
}
.layerName {
	padding: 6px 3px 7px;
	line-height: 27px;
	border: 2px dashed #5c78a0;
}
.listScroll {
	height: 38px;
	background: #f4f4f0;
}
.listScroll button {
	color: #44587c;
	background: #bccafa;
}
.listScroll .off {
	color: #c0c0b8;
	background: #f2f2ea;
}
.listScroll .thumb {
	flex: 284;
	background: linear-gradient(#ccd8fc, #b8c8f8);
}
.track {
	flex: 112;
}
.layerButtons {
	display: grid;
	grid-template-columns: repeat(6, 1fr);
	flex: none;
	gap: 8px;
	padding: 6px 5px 4px 6px;
}
.layerButtons button {
	display: flex;
	align-items: center;
	justify-content: center;
	height: 43px;
	background: linear-gradient(#fff, #f0f0ea 70%, #d4dcec);
	border: 3px solid #4c7494;
	border-radius: 6px;
}
.layerButtons .off {
	background: #f4f3ea;
	border: 2px solid #e6e4da;
}
.layerButtons .hover {
	box-shadow: inset 0 0 0 4px #f4b848;
}
.dockFoot {
	flex: none;
	height: 17px;
	border-top: 4px solid #dedccc;
}

/* things on top */
.tooltip {
	position: absolute;
	left: 368px;
	top: 1466px;
	padding: 3px 1px 0;
	height: 36px;
	line-height: 28px;
	white-space: nowrap;
	background: #ece0b4;
	border-top: 3px solid #948c70;
	box-shadow: 3px 4px 4px #00001c;
}
.note {
	position: absolute;
	left: 261px;
	top: 1100px;
	margin: 0;
	font: 94px/106px "Liberation Sans", Arial, sans-serif;
	color: #cc2222;
}
.ring {
	position: absolute;
	left: 211px;
	top: 1344px;
	width: 184px;
	height: 164px;
	border: 13px solid #cc2222;
	border-radius: 50%;
}
```
FILE: script.js
```
var SVG_NS = "http://www.w3.org/2000/svg";
var STEP = 149; // screen pixels for 100 image pixels

function addLine(svg, x1, y1, x2, y2) {
	var line = document.createElementNS(SVG_NS, "line");
	line.setAttribute("x1", x1);
	line.setAttribute("y1", y1);
	line.setAttribute("x2", x2);
	line.setAttribute("y2", y2);
	line.setAttribute("class", "tick");
	svg.appendChild(line);
}

function addText(svg, x, y, value) {
	var text = document.createElementNS(SVG_NS, "text");
	text.setAttribute("x", x);
	text.setAttribute("y", y);
	text.setAttribute("class", "rulerText");
	text.textContent = value;
	svg.appendChild(text);
}

// length of a tick: long every 100, middle every 20, short every 10
function tickSize(i) {
	if (i % 10 === 0) return 32;
	return i % 2 === 0 ? 17 : 9;
}

function drawHorizontal() {
	var svg = document.getElementById("hRuler");
	for (var i = -6; i < 87; i++) {
		var x = Math.round(104 + (i * STEP) / 10);
		addLine(svg, x, 38 - tickSize(i), x, 38);
		if (i % 10 === 0) addText(svg, x + 3, 32, i * 10);
	}
	addText(svg, -6, 32, "0");
	var mark = document.createElementNS(SVG_NS, "path");
	mark.setAttribute("d", "M4 26h18l-9 11z");
	svg.appendChild(mark);
}

function drawVertical() {
	var svg = document.getElementById("vRuler");
	for (var i = -6; i < 66; i++) {
		var y = Math.round(99 + (i * STEP) / 10);
		addLine(svg, 36 - tickSize(i) + (i % 10 === 0 ? 2 : 0), y, 36, y);
		if (i % 10 === 0) {
			String(i * 10).split("").forEach(function (digit, n) {
				addText(svg, 5, y + 21 + n * 22, digit);
			});
		}
	}
	addText(svg, 5, 16, "0");
	addText(svg, 5, 38, "0");
	var mark = document.createElementNS(SVG_NS, "path");
	mark.setAttribute("d", "M25 802v18l11-9z");
	svg.appendChild(mark);
}

drawHorizontal();
drawVertical();
```
